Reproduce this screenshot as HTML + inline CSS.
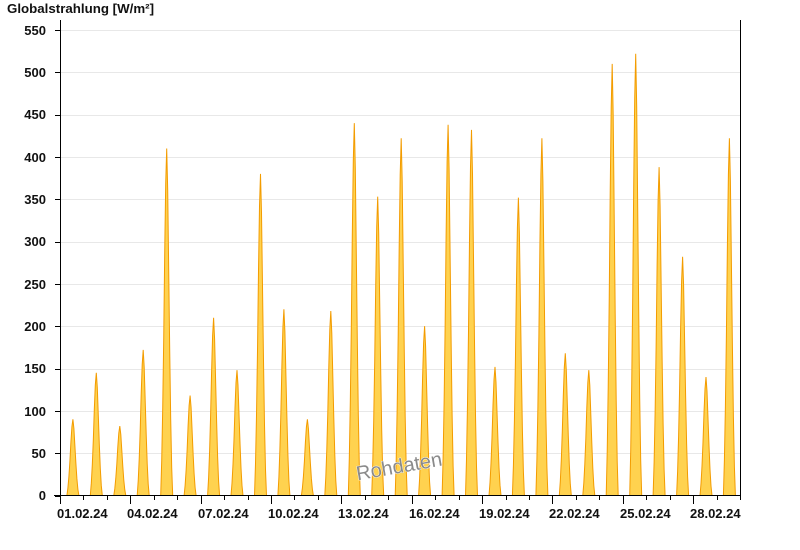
<!DOCTYPE html>
<html><head><meta charset="utf-8"><style>
body{margin:0;background:#fff;width:800px;height:550px;overflow:hidden}
svg{display:block}
text{font-family:"Liberation Sans",Arial,sans-serif;font-weight:bold;font-size:13px;fill:#111}
</style></head><body>
<svg id="s" width="800" height="550" xmlns="http://www.w3.org/2000/svg">
<text x="7" y="13" textLength="147" lengthAdjust="spacingAndGlyphs">Globalstrahlung [W/m²]</text>
<g id="grid"></g>
<g id="bars"></g>
<g id="ylab" text-anchor="end">
<text x="46" y="500">0</text><text x="46" y="458">50</text><text x="46" y="416">100</text><text x="46" y="373">150</text><text x="46" y="331">200</text><text x="46" y="289">250</text><text x="46" y="246">300</text><text x="46" y="204">350</text><text x="46" y="162">400</text><text x="46" y="119">450</text><text x="46" y="77">500</text><text x="46" y="35">550</text>
</g>
<g id="xlab">
<text x="57" y="518">01.02.24</text><text x="127" y="518">04.02.24</text><text x="198" y="518">07.02.24</text><text x="268" y="518">10.02.24</text><text x="338" y="518">13.02.24</text><text x="409" y="518">16.02.24</text><text x="479" y="518">19.02.24</text><text x="549" y="518">22.02.24</text><text x="620" y="518">25.02.24</text><text x="690" y="518">28.02.24</text>
</g>
<text x="399" y="473" text-anchor="middle" transform="rotate(-10 399 466)" style="font-size:20px;font-weight:normal;fill:#8a8a8a;stroke:#fff;stroke-width:0.8;paint-order:stroke">Rohdaten</text>
<line x1="60.5" y1="20" x2="60.5" y2="496" stroke="#000"/>
<line x1="740.5" y1="20" x2="740.5" y2="496" stroke="#000"/>
<line x1="54" y1="495.5" x2="741" y2="495.5" stroke="#000"/>
<g id="ticks"></g>
</svg>
<script>
var NS="http://www.w3.org/2000/svg";
function el(p,n,a){var e=document.createElementNS(NS,n);for(var k in a)e.setAttribute(k,a[k]);p.appendChild(e);return e;}
var g=document.getElementById('grid'),b=document.getElementById('bars'),t=document.getElementById('ticks');
function Y(v){return 495.5-v*465.5/550;}
for(var v=50;v<=550;v+=50){var y=Math.round(Y(v))+0.5;el(g,'line',{x1:61,y1:y,x2:740,y2:y,stroke:'#e8e8e8'});}
for(var v=0;v<=550;v+=50){var y=Math.round(Y(v))+0.5;el(t,'line',{x1:55,y1:y,x2:60,y2:y,stroke:'#000'});}
var W=680/29;
for(var d=0;d<=29;d++){var x=Math.round(60+W*d)+0.5;el(t,'line',{x1:x,y1:496,x2:x,y2:d%3==0?504:500,stroke:'#000'});}
var P=[90,145,82,172,410,118,210,148,380,220,90,218,440,353,422,200,438,432,152,352,422,168,148,510,522,388,282,140,422];
var prof=[[-6,0],[-5,0.1],[-4,0.25],[-3,0.45],[-2,0.7],[-1,0.9],[0,1],[1,0.88],[2,0.65],[3,0.42],[4,0.22],[5,0.08],[6,0]];
for(var d=0;d<29;d++){var cx=60+W*(d+0.55);var pts=[];
for(var i=0;i<prof.length;i++){pts.push((cx+prof[i][0]).toFixed(1)+','+Y(P[d]*prof[i][1]).toFixed(1));}
el(b,'polygon',{points:pts.join(' '),fill:'#ffd24f',stroke:'#f39c00','stroke-width':1});}
</script>
</body></html>
